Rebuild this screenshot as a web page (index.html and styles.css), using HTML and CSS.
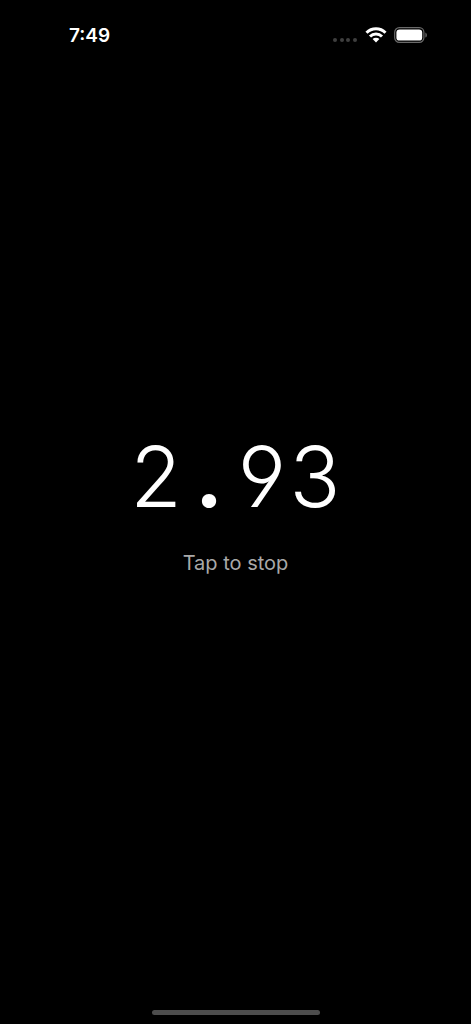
FILE: index.html
```html
<!DOCTYPE html>
<html lang="en">
<head>
  <meta charset="UTF-8">
  <meta name="viewport" content="width=device-width, initial-scale=1.0">
  <title>Stopwatch</title>
  <link rel="stylesheet" href="styles.css">
</head>
<body>
  <header class="status-bar">
    <time class="clock">7:49</time>
    <div class="indicators">
      <div class="signal"><i></i><i></i><i></i><i></i></div>
      <svg class="wifi" width="22" height="16" viewBox="0 0 22 16" aria-label="Wi-Fi">
        <g fill="none" stroke="#fff" stroke-width="3">
          <path d="M1.5 5.7a13.4 13.4 0 0 1 19 0"/>
          <path d="M5 9.5a8.5 8.5 0 0 1 12 0"/>
        </g>
        <path fill="#fff" d="M11 15.4l-3.4-3.3a4.8 4.8 0 0 1 6.8 0z"/>
      </svg>
      <svg class="battery" width="34" height="16" viewBox="0 0 34 16" aria-label="Battery">
        <rect x="0.7" y="0.7" width="29.2" height="14.6" rx="4.6" fill="none" stroke="#6a6a6a" stroke-width="1.2"/>
        <rect x="2.4" y="2.4" width="25.8" height="11.2" rx="3.2" fill="#fff"/>
        <path d="M31.4 5.4c1.9.8 1.9 4.4 0 5.2z" fill="#6a6a6a"/>
      </svg>
    </div>
  </header>

  <button class="timer" type="button">
    <span class="digits"><span>2</span><span class="point">.</span><span>9</span><span>3</span></span>
    <span class="hint">Tap to stop</span>
  </button>

  <footer class="home"><div class="home-bar"></div></footer>
</body>
</html>
```

FILE: styles.css
```css
* {
  box-sizing: border-box;
}
body {
  margin: 0;
  min-height: 100vh;
  display: flex;
  flex-direction: column;
  background: #000;
  color: #fff;
  font-family: Inter, "Liberation Sans", sans-serif;
}
.status-bar {
  display: flex;
  justify-content: space-between;
  align-items: center;
  height: 70px;
  padding: 0 43px 0 69px;
}
.clock {
  font-size: 19px;
  font-weight: 600;
}
.indicators {
  display: flex;
  align-items: center;
  gap: 8px;
}
.signal {
  display: flex;
  justify-content: space-between;
  width: 24px;
  padding-top: 10px;
}
.signal i {
  width: 4px;
  height: 4px;
  border-radius: 50%;
  background: #3f3f3f;
}
.wifi {
  margin-right: -1px;
}
.timer {
  flex: 1;
  display: flex;
  flex-direction: column;
  align-items: center;
  justify-content: center;
  gap: 22px;
  padding: 0 0 80px;
  border: none;
  background: none;
  color: inherit;
  font-family: inherit;
  cursor: pointer;
}
.digits {
  display: grid;
  grid-template-columns: repeat(4, 53px);
  justify-items: center;
  font-size: 84px;
  font-weight: 300;
  line-height: 104px;
  font-feature-settings: "cv04";
}
.point {
  font-weight: 700;
}
.hint {
  font-size: 20px;
  line-height: 24px;
  color: #a9a9a9;
}
.home {
  display: flex;
  justify-content: center;
  padding-bottom: 9px;
}
.home-bar {
  width: 168px;
  height: 5px;
  border-radius: 3px;
  background: #4d4d4d;
}
```
